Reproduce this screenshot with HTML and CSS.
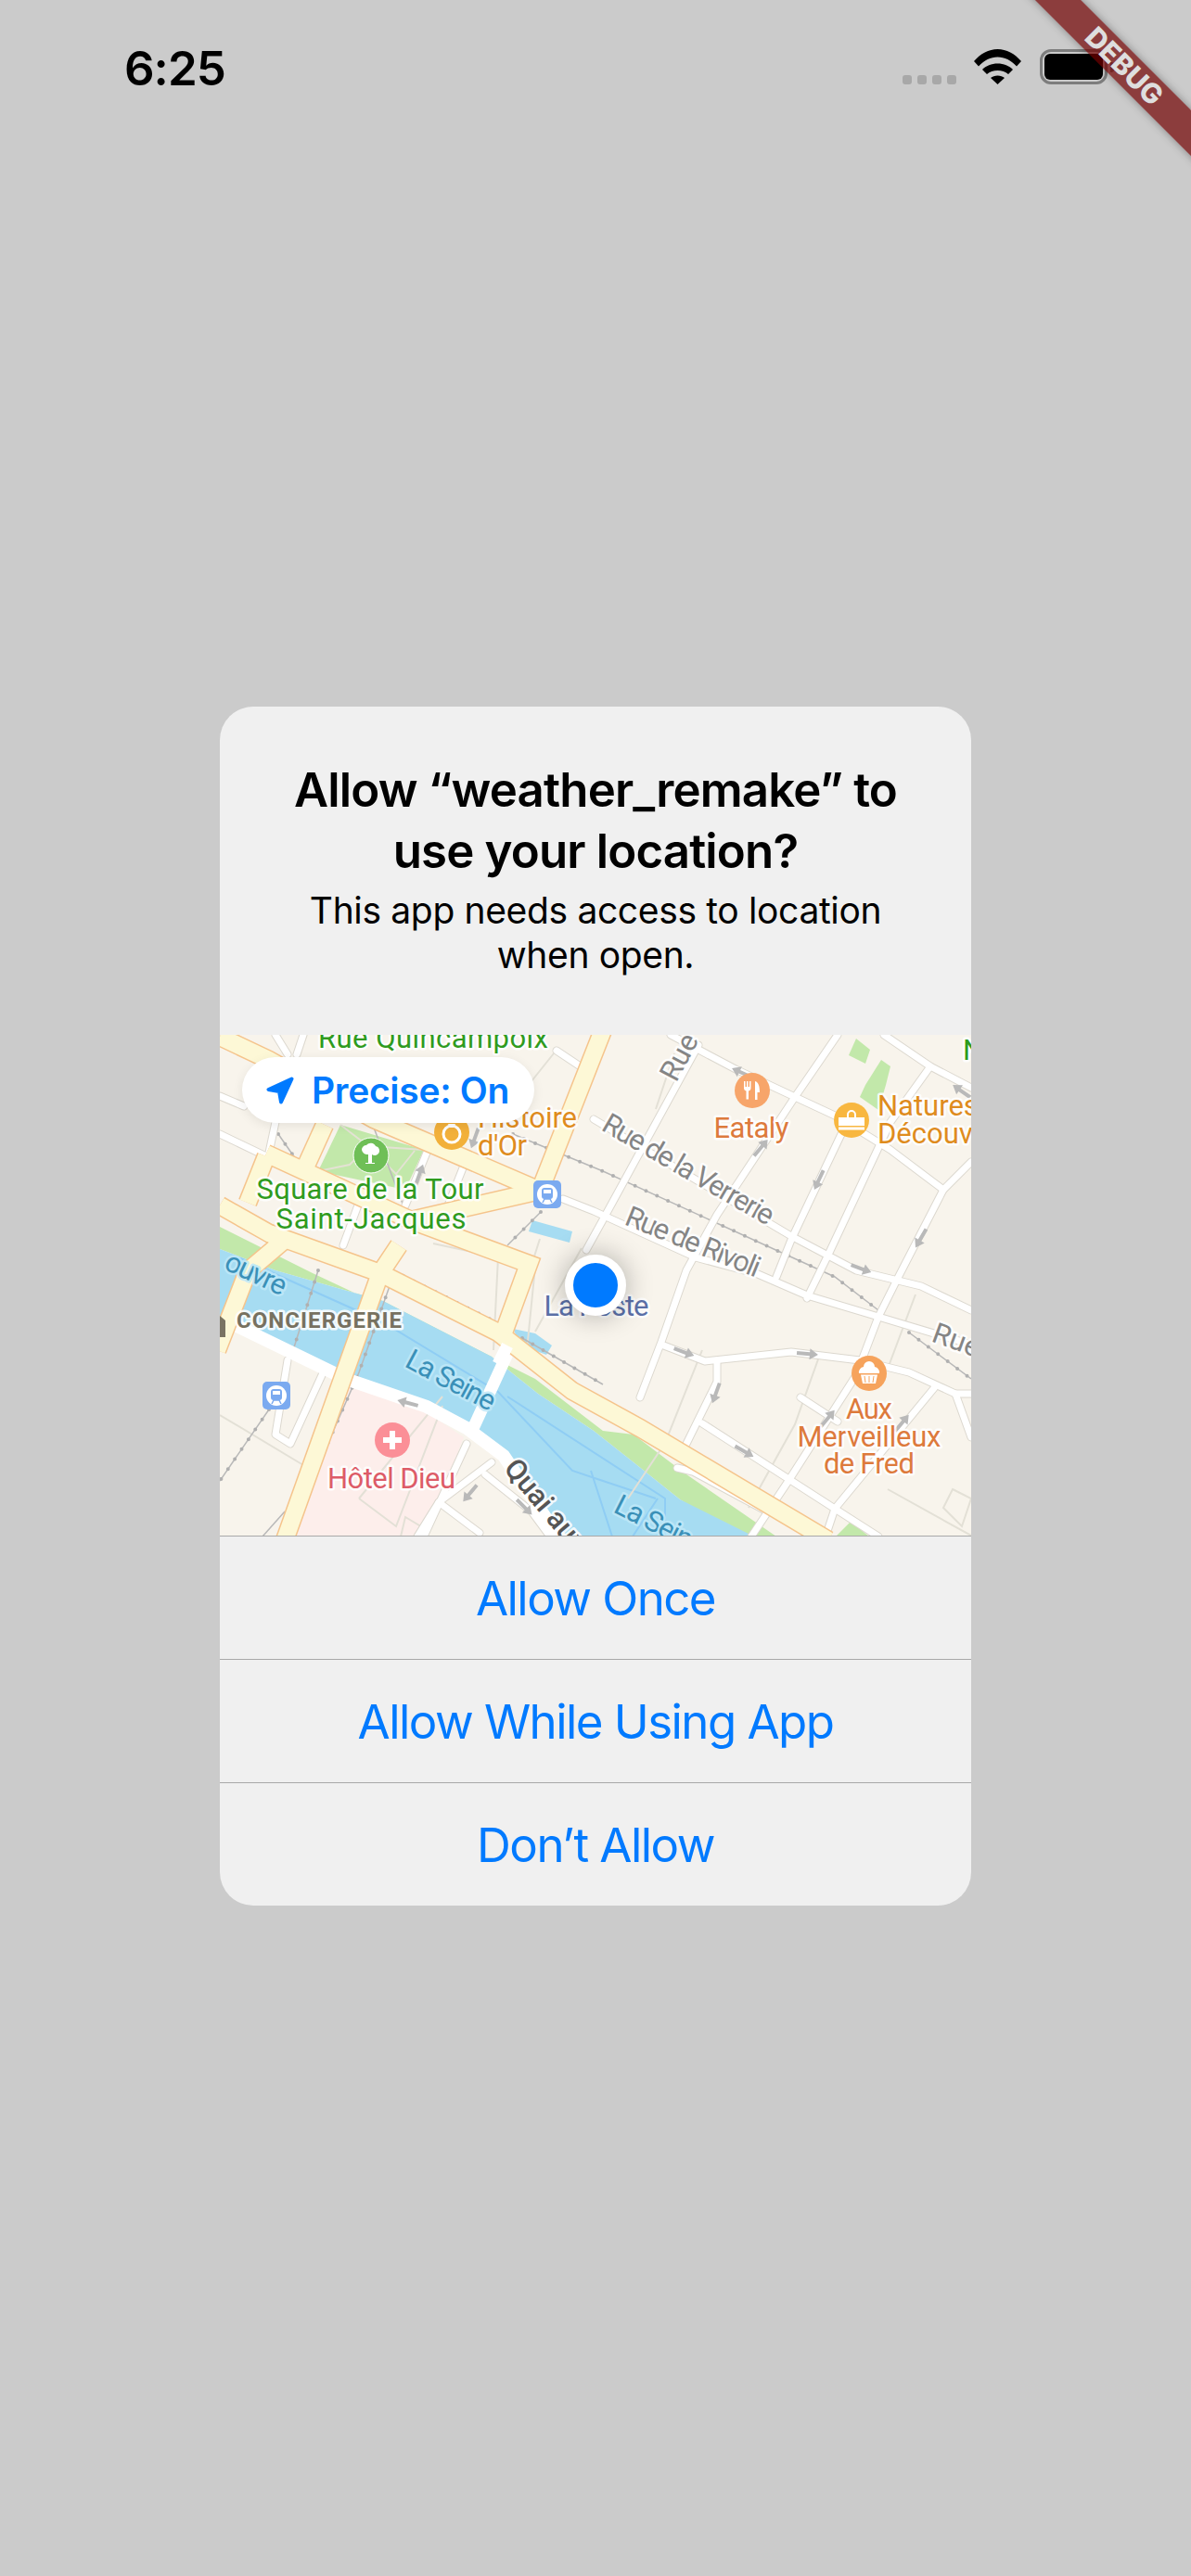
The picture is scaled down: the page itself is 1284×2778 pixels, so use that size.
FILE: index.html
```html
<!DOCTYPE html>
<html lang="en">
<head>
    <meta charset="UTF-8">
    <title>weather_remake</title>
    <link rel="stylesheet" href="styles.css">
</head>
<body>
<div class="screen">
    <!-- Status bar -->
    <div class="status">
        <span class="time">6:25</span>
        <div class="status-icons">
            <div class="signal"><i></i><i></i><i></i><i></i></div>
            <svg class="wifi" viewBox="0 0 51 38" width="51" height="38">
                <path d="M0 13C7 5 16 0 25.5 0S44 5 51 13L46 18.5C40 12 33 8.5 25.5 8.5S11 12 5 18.5Z"/>
                <path d="M9 22C13 18 19 15.5 25.5 15.5S38 18 42 22L37 27C34 24.5 30 23 25.5 23S17 24.5 14 27Z"/>
                <path d="M18 31C20 29.5 22.5 28.5 25.5 28.5S31 29.5 33 31L25.5 38Z"/>
            </svg>
            <div class="battery"><div class="battery-level"></div></div>
            <div class="battery-nub"></div>
        </div>
    </div>

    <!-- Location permission alert -->
    <div class="alert">
        <div class="alert-head">
            <h1>Allow “weather_remake” to<br>use your location?</h1>
            <p>This app needs access to location<br>when open.</p>
        </div>

        <div class="map">
            <svg class="map-art" viewBox="0 0 810 540" width="810" height="540">
                <defs>
                    <g id="minor-roads">
                        <path d="M486 0L556 37L620 67L663 87L723 124L780 167"/>
                        <path d="M666 0L620 67L536 194L503 254L476 331L453 391"/>
                        <path d="M516 11L416 194L395 232"/>
                        <path d="M363 17L393 37"/>
                        <path d="M403 91L616 217L686 254L756 271L810 297"/>
                        <path d="M370 177L403 190L513 240L580 258L633 281L710 304L810 334"/>
                        <path d="M766 34L723 94L656 237L633 284"/>
                        <path d="M670 107L616 221L600 261"/>
                        <path d="M810 137L780 167L730 264L710 304L686 367L613 481L573 541"/>
                        <path d="M716 0L766 34L810 57"/>
                        <path d="M476 334L523 352L616 342L690 351L743 364L793 387L810 387"/>
                        <path d="M536 352V374L503 441"/>
                        <path d="M520 419L663 511L710 541"/>
                        <path d="M770 381L663 511L653 541"/>
                        <path d="M626 391L666 417"/>
                        <path d="M493 467L510 471L590 514"/>
                        <path d="M793 387L810 434"/>
                        <path d="M0 107L50 131"/>
                        <path d="M0 66L26 77"/>
                        <path d="M60 94L53 127"/>
                        <path d="M150 181L133 227"/>
                        <path d="M223 127L200 184"/>
                        <path d="M263 141L246 184"/>
                        <path d="M60 0L73 21"/>
                        <path d="M90 0L83 21"/>
                        <path d="M73 351L60 431L76 441L110 367"/>
                        <path d="M293 461L236 504L213 541"/>
                        <path d="M236 504L280 537"/>
                        <path d="M286 474L336 514L356 541"/>
                        <path d="M266 441L220 541"/>
                    </g>
                    <g id="major-roads">
                        <path d="M0 2L53 27L166 91L345 168"/>
                        <path d="M0 184L53 214L173 257L300 321L380 384L453 424L656 545"/>
                        <path d="M413 -5L345 168L206 200"/>
                        <path d="M50 128L206 200L333 247L306 321"/>
                        <path d="M113 97L93 141"/>
                        <path d="M50 131L30 181"/>
                        <path d="M193 227L173 257L70 545"/>
                        <path d="M53 214L70 221L30 255L-3 340"/>
                    </g>
                    <g id="arrow">
                        <path d="M-11 -2H3V-6L12 0L3 6V2H-11Z"/>
                    </g>
                    <g id="train">
                        <rect width="30" height="30" rx="5" fill="#7baaf0"/>
                        <circle cx="15" cy="15" r="11" fill="#fff"/>
                        <rect x="9" y="8" width="12" height="12" rx="3" fill="#7baaf0"/>
                        <rect x="11" y="10" width="8" height="4" fill="#fff"/>
                        <path d="M10 24L12 20H18L20 24" stroke="#7baaf0" fill="none" stroke-width="1.5"/>
                    </g>
                </defs>

                <!-- Land use -->
                <path class="hospital-land" d="M138 379L223 407L263 434L220 541H76Z"/>
                <path class="grass" d="M0 207L100 257L300 351L340 371L413 427L446 431L503 474L600 541H560L496 501L446 461L403 427L343 387L293 347L176 287L60 254L0 231Z"/>
                <path class="water" d="M0 231L60 254L176 287L293 347L343 387L403 427L446 461L496 501L576 541H375L306 454L266 424L223 401L136 371L6 311H0Z"/>
                <path class="water-line" d="M20 240L176 310L300 385L380 470L410 480L470 500M310 390L480 500L480 541M400 470L423 541M472 500L445 541"/>
                <path class="water" d="M316 317L340 322L358 335L352 345L325 335Z"/>
                <path class="water" d="M337 200L380 212L377 224L333 212Z"/>
                <path class="grass" d="M130 97L220 124L200 167L106 147Z"/>
                <path class="park-path" d="M130 97L160 120L220 124M160 120L140 140L106 147M160 120L190 150L200 167M190 150L210 125"/>
                <path class="grass" d="M686 4L701 16L696 31L678 22Z"/>
                <path class="grass" d="M713 27L723 34L718 54L710 81L690 67L696 54Z"/>
                <path class="grass" d="M660 545L680 525L705 545Z"/>

                <!-- Building and block outlines -->
                <path class="block-line" d="M360 20L320 70M345 220L310 330M490 20L470 80M390 230L340 320M520 340L480 440L440 500M645 350L620 420L570 510M750 280L720 360M0 410L100 470M240 390L150 500M150 500L190 530L240 400M720 490L810 540M790 490L810 500L800 530L780 510ZM230 225L300 240L295 340M340 250L330 350M200 520L225 535L215 541H195Z"/>

                <!-- Rail lines -->
                <g class="rail">
                    <path d="M316 107L413 147L663 261L710 297"/>
                    <path d="M743 321L810 371"/>
                    <path d="M106 254L80 337"/>
                    <path d="M183 271L150 364L96 487"/>
                    <path d="M53 404L0 481"/>
                    <path d="M70 514L46 541"/>
                    <path d="M186 254L300 311"/>
                    <path d="M326 327L413 377"/>
                    <path d="M63 107L93 150"/>
                    <path d="M166 100L200 190"/>
                    <path d="M346 191L310 227"/>
                </g>
                <g class="rail-dots">
                    <path d="M316 107L413 147L663 261L710 297"/>
                    <path d="M743 321L810 371"/>
                    <path d="M106 254L80 337"/>
                    <path d="M183 271L150 364L96 487"/>
                    <path d="M53 404L0 481"/>
                    <path d="M186 254L300 311"/>
                    <path d="M326 327L413 377"/>
                    <path d="M63 107L93 150"/>
                    <path d="M346 191L310 227"/>
                </g>

                <!-- Roads -->
                <use href="#minor-roads" class="road-case"/>
                <use href="#minor-roads" class="road-fill"/>
                <path class="quay" d="M0 305L136 371L223 401L266 424L306 454L365 541"/>
                <path class="bridge" d="M310 344L270 431"/>
                <use href="#major-roads" class="major-case"/>
                <use href="#major-roads" class="major-fill"/>
                <path class="bridge" d="M310 335L300 355"/>

                <!-- One-way arrows -->
                <g class="arrows">
                    <use href="#arrow" transform="translate(563 41) rotate(-155)"/>
                    <use href="#arrow" transform="translate(583 122) rotate(-50)"/>
                    <use href="#arrow" transform="translate(646 156) rotate(115)"/>
                    <use href="#arrow" transform="translate(800 61) rotate(-145)"/>
                    <use href="#arrow" transform="translate(756 219) rotate(120)"/>
                    <use href="#arrow" transform="translate(691 252) rotate(20)"/>
                    <use href="#arrow" transform="translate(500 342) rotate(20)"/>
                    <use href="#arrow" transform="translate(633 344) rotate(5)"/>
                    <use href="#arrow" transform="translate(535 386) rotate(110)"/>
                    <use href="#arrow" transform="translate(565 449) rotate(30)"/>
                    <use href="#arrow" transform="translate(655 414) rotate(-50)"/>
                    <use href="#arrow" transform="translate(735 419) rotate(-50)"/>
                    <use href="#arrow" transform="translate(203 397) rotate(195)"/>
                    <use href="#arrow" transform="translate(270 494) rotate(130)"/>
                    <use href="#arrow" transform="translate(328 509) rotate(45)"/>
                    <use href="#arrow" transform="translate(215 151) rotate(-70)"/>
                    <use href="#arrow" transform="translate(275 111) rotate(110)"/>
                </g>

                <!-- Points of interest -->
                <circle cx="250" cy="105" r="19" fill="#f2b03a"/>
                <circle cx="250" cy="107" r="9" fill="none" stroke="#fff" stroke-width="3"/>
                <path d="M246 96H254L252 100H248Z" fill="#fff"/>

                <circle cx="163" cy="130" r="19" fill="#6fbf57" stroke="#fff" stroke-width="1"/>
                <path d="M153 124a5 5 0 0 1 5-5a6 6 0 0 1 10 1a5 5 0 0 1 3 8a5 5 0 0 1-7 1v9h3v1h-10v-1h3v-9a6 6 0 0 1-7-5Z" fill="#fff"/>

                <use href="#train" x="338" y="157"/>
                <use href="#train" x="46" y="374"/>

                <circle cx="574" cy="60" r="19" fill="#f7a56a"/>
                <path d="M565 50h1.500v6h1.500v-6h1.500v6h1.500v-6h1.500v8a3 3 0 0 1-2.500 2.500v9h-2.500v-9a3 3 0 0 1-2.500-2.500ZM577 70V50c4 1 5 6 5 12h-2.500v8Z" fill="#fff"/>

                <circle cx="681" cy="92" r="19" fill="#f8b740"/>
                <path d="M667 89h28v9h-28ZM667 99.500h28v3h-28ZM676 89v-3a5 5 0 0 1 10 0v3h-2v-3a3 3 0 0 0-6 0v3Z" fill="#fff"/>

                <circle cx="700" cy="365" r="19" fill="#f6a35c"/>
                <path d="M689 365a6 6 0 0 1 5-7a6 6 0 0 1 12 0a6 6 0 0 1 5 7ZM691 366.500h18l-2 9.500h-14Z" fill="#fff"/>
                <path d="M695 368l1 7M700 368v7M705 368l-1 7" stroke="#f6a35c" stroke-width="1"/>

                <circle cx="186" cy="437" r="19" fill="#fb8f97"/>
                <path d="M183 427h6v7h7v6h-7v7h-6v-7h-7v-6h7Z" fill="#fff"/>

                <path d="M0 303L6 308V326H0Z" fill="#7a7462"/>

                <!-- Labels -->
                <g class="labels">
                    <text class="lbl green mid" x="230" y="14" textLength="248">Rue Quincampoix</text>
                    <text class="lbl green mid" x="162" y="177" textLength="245">Square de la Tour</text>
                    <text class="lbl green mid" x="163" y="209" textLength="205">Saint-Jacques</text>
                    <text class="lbl gold" x="278" y="100" textLength="107">Histoire</text>
                    <text class="lbl gold" x="278" y="130" textLength="53">d'Or</text>
                    <text class="lbl rust mid" x="573" y="111" textLength="81">Eataly</text>
                    <text class="lbl gold" x="709" y="87">Natures</text>
                    <text class="lbl gold" x="709" y="117">Découv</text>
                    <text class="lbl green" x="801" y="27">N</text>
                    <text class="lbl road" transform="translate(410 102) rotate(30)" textLength="208">Rue de la Verrerie</text>
                    <text class="lbl road" transform="translate(435 204) rotate(22)" textLength="154">Rue de Rivoli</text>
                    <text class="lbl road" transform="translate(492 52) rotate(-62)">Rue de</text>
                    <text class="lbl road" transform="translate(766 330) rotate(20)">Rue</text>
                    <text class="lbl post mid" x="406" y="303" textLength="113">La Poste</text>
                    <text class="lbl site" x="18" y="316" textLength="178">CONCIERGERIE</text>
                    <text class="lbl river" transform="translate(3 252) rotate(25)" textLength="70">ouvre</text>
                    <text class="lbl river" transform="translate(198 357) rotate(28)" textLength="105">La Seine</text>
                    <text class="lbl river" transform="translate(423 514) rotate(27)" textLength="105">La Seine</text>
                    <text class="lbl med mid" x="185" y="489" textLength="138">Hôtel Dieu</text>
                    <text class="lbl quai" transform="translate(305 468) rotate(50)">Quai aux F</text>
                    <text class="lbl rust mid" x="700" y="414" textLength="50">Aux</text>
                    <text class="lbl rust mid" x="700" y="444" textLength="155">Merveilleux</text>
                    <text class="lbl rust mid" x="700" y="473" textLength="98">de Fred</text>
                </g>
            </svg>

            <div class="precise">
                <svg viewBox="0 0 30 30" width="30" height="30">
                    <path d="M27.500 2.500L2.500 14L14 16L16 27.500Z"/>
                </svg>
                <span>Precise: On</span>
            </div>
            <div class="user-dot"></div>
        </div>

        <div class="actions">
            <div class="action">Allow Once</div>
            <div class="action">Allow While Using App</div>
            <div class="action">Don’t Allow</div>
        </div>
    </div>

    <div class="debug-banner">DEBUG</div>
</div>
</body>
</html>
```

FILE: styles.css
```css
* {
    box-sizing: border-box;
}
html, body {
    margin: 0;
    padding: 0;
}
body {
    background: #cbcbcb;
    font-family: Inter, "Noto Sans", sans-serif;
}
.screen {
    position: relative;
    width: 1284px;
    height: 2778px;
    overflow: hidden;
}

/* status bar */
.status {
    display: flex;
    justify-content: space-between;
    height: 53px;
    margin-top: 53px;
    padding: 0 83px 0 134px;
}
.time {
    padding-top: 1px;
    font-size: 51px;
    line-height: 39px;
    font-weight: 600;
    letter-spacing: -1px;
    color: #000;
}
.status-icons {
    display: flex;
    align-items: flex-start;
}
.signal {
    display: flex;
    gap: 6px;
    margin-top: 28px;
}
.signal i {
    display: block;
    width: 10px;
    height: 10px;
    border-radius: 3px;
    background: #a8a8a8;
}
.wifi {
    margin-left: 19px;
    fill: #000;
}
.battery {
    width: 73px;
    height: 38px;
    margin-left: 20px;
    padding: 2px;
    border: 3px solid #7d7d7d;
    border-radius: 12px;
}
.battery-level {
    width: 100%;
    height: 100%;
    background: #000;
    border-radius: 6px;
}
.battery-nub {
    width: 4px;
    height: 11px;
    margin: 14px 0 0 3px;
    background: #7d7d7d;
    border-radius: 0 3px 3px 0;
}

/* alert */
.alert {
    width: 810px;
    margin: 656px auto 0;
    background: #f0f0f0;
    border-radius: 36px;
    overflow: hidden;
}
.alert-head {
    height: 354px;
    padding-top: 57px;
    text-align: center;
    color: #000;
}
.alert-head h1 {
    margin: 0;
    font-size: 51px;
    line-height: 66px;
    font-weight: 600;
    letter-spacing: -0.85px;
}
.alert-head p {
    margin: 0;
    padding-top: 7px;
    font-size: 39px;
    line-height: 48px;
    font-weight: 400;
    letter-spacing: -0.35px;
}

/* map */
.map {
    position: relative;
    height: 540px;
    background: #f8f4ec;
    overflow: hidden;
}
.map-art {
    display: block;
}
.hospital-land { fill: #fdeeeb; }
.grass { fill: #c2e8aa; }
.water { fill: #a6dcf2; }
.water-line {
    fill: none;
    stroke: #8fcdf4;
    stroke-width: 2;
}
.park-path {
    fill: none;
    stroke: #e4e2d4;
    stroke-width: 2;
}
.block-line {
    fill: none;
    stroke: #e3e0d6;
    stroke-width: 2;
}
.rail {
    fill: none;
    stroke: #b8b8b8;
    stroke-width: 1.5;
}
.rail-dots {
    fill: none;
    stroke: #b0b0b0;
    stroke-width: 4;
    stroke-linecap: round;
    stroke-dasharray: 0 13;
}
.road-case {
    fill: none;
    stroke: #dcd8cf;
    stroke-width: 9;
    stroke-linecap: round;
    stroke-linejoin: round;
}
.road-fill {
    fill: none;
    stroke: #fff;
    stroke-width: 7;
    stroke-linecap: round;
    stroke-linejoin: round;
}
.quay {
    fill: none;
    stroke: #fff;
    stroke-width: 14;
}
.bridge {
    fill: none;
    stroke: #fff;
    stroke-width: 13;
}
.major-case {
    fill: none;
    stroke: #f5c48c;
    stroke-width: 21;
}
.major-fill {
    fill: none;
    stroke: #fdf8d6;
    stroke-width: 18;
}
.arrows {
    fill: #b9b9b9;
}
.lbl {
    font-family: Roboto, "Noto Sans", sans-serif;
    font-size: 31px;
    paint-order: stroke;
    stroke: rgba(255, 255, 255, 0.85);
    stroke-width: 5px;
    stroke-linejoin: round;
}
.mid { text-anchor: middle; }
.green { fill: #2f9b1e; }
.gold { fill: #df8c1e; }
.rust { fill: #dd7a3c; }
.road { fill: #858585; }
.post { fill: #5b70a8; }
.med { fill: #dd5c68; }
.river {
    fill: #3a90b8;
    stroke: rgba(190, 232, 248, 0.9);
}
.site {
    fill: #777160;
    font-size: 24px;
    font-weight: 700;
}
.quai {
    fill: #555;
    font-weight: 500;
}
.precise {
    position: absolute;
    left: 24px;
    top: 24px;
    display: flex;
    align-items: center;
    gap: 19px;
    width: 315px;
    height: 71px;
    padding-left: 26px;
    background: #fff;
    border-radius: 36px;
    box-shadow: 0 3px 12px rgba(0, 0, 0, 0.08);
    color: #007aff;
    font-size: 39px;
    font-weight: 600;
    letter-spacing: -0.3px;
}
.precise svg {
    fill: #007aff;
    stroke: #007aff;
    stroke-width: 4;
    stroke-linejoin: round;
}
.user-dot {
    position: absolute;
    left: 372px;
    top: 237px;
    width: 66px;
    height: 66px;
    background: #007aff;
    border: 9px solid #fff;
    border-radius: 50%;
    box-shadow: 0 0 30px rgba(0, 0, 0, 0.3);
}

/* buttons */
.action {
    height: 133px;
    border-top: 1px solid #a9a9a9;
    text-align: center;
    font-size: 51px;
    line-height: 134px;
    letter-spacing: -1.55px;
    color: #007aff;
}

/* flutter banner */
.debug-banner {
    position: absolute;
    left: 1062px;
    top: 54px;
    width: 300px;
    height: 35px;
    transform: rotate(45deg);
    background: rgba(113, 0, 0, 0.7);
    box-shadow: 0 0 10px rgba(0, 0, 0, 0.35);
    color: #dedede;
    text-align: center;
    font-family: Inter, sans-serif;
    font-size: 30px;
    line-height: 35px;
    font-weight: 800;
}
```
